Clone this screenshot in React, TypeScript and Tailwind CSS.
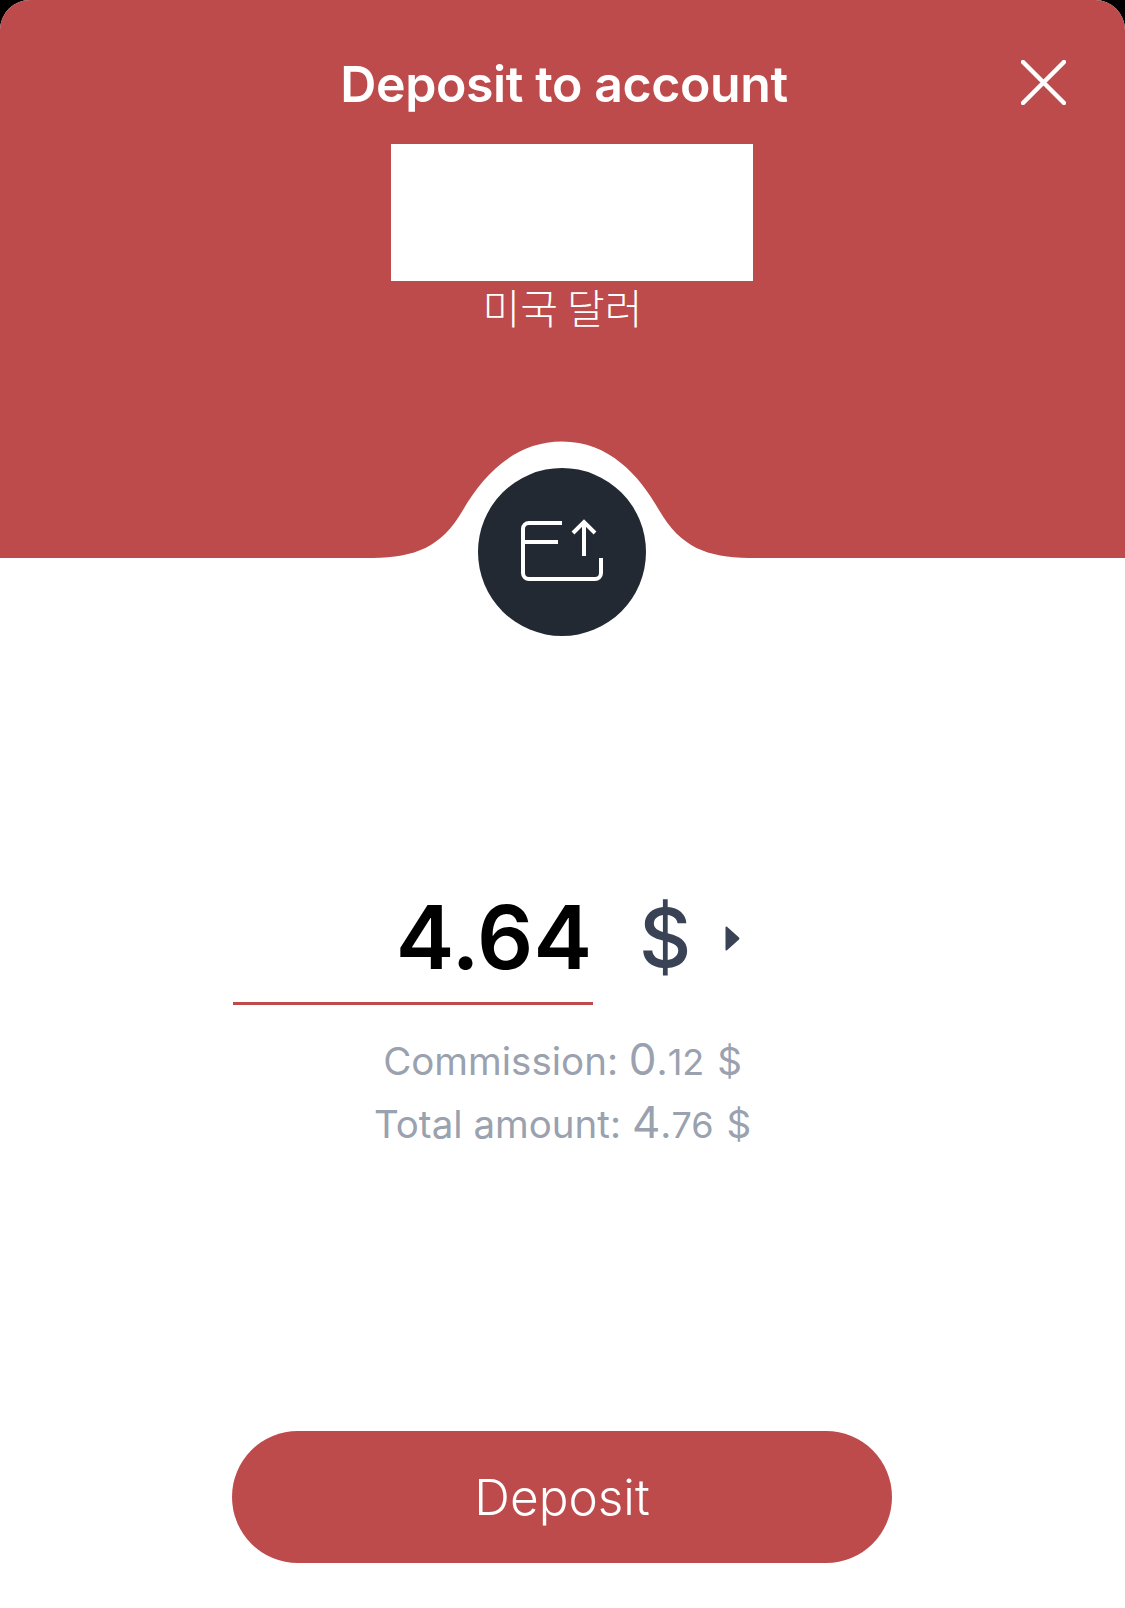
function DepositIcon() {
  return (
    <svg className="w-[88px] h-[68px]" viewBox="0 0 88 68" fill="none" stroke="white" strokeWidth="4">
      <path d="M44 5H11a6 6 0 0 0-6 6v44a6 6 0 0 0 6 6h66a6 6 0 0 0 6-6V40" />
      <path d="M5 24h35" />
      <path d="M66 38V4M55 15L66 4l11 11" />
    </svg>
  );
}

export default function App() {
  return (
    <div className="h-[1608px] bg-black font-['Inter',sans-serif]">
      <div className="relative flex flex-col h-full bg-white rounded-t-[30px] overflow-hidden">
        {/* Header */}
        <div className="relative flex flex-col items-center h-[558px] bg-[#bd4b4b] text-white">
          <h1 className="mt-[54px] ml-[3px] text-[50px] leading-[60px] font-semibold tracking-[-0.4px]">Deposit to account</h1>
          <div className="self-start ml-[391px] mt-[30px] w-[362px] h-[137px] bg-white" />
          <p className="mt-[-3px] text-[41px] leading-[56px] font-light font-['Noto_Sans_CJK_KR',sans-serif]">미국 달러</p>

          <button className="absolute top-[60px] right-[59px] text-white">
            <svg className="w-[45px] h-[45px] block" viewBox="0 0 45 45" fill="none" stroke="currentColor" strokeWidth="4.5" strokeLinecap="round">
              <path d="M2 2l41 41M43 2L2 43" />
            </svg>
          </button>

          <svg className="absolute left-0 top-[440px] w-[1125px] h-[119px]" viewBox="0 0 1125 119" fill="none">
            <path d="M373 118C415 117 441 108 463 70C483 35 515 1.500 562 1.500C609 1.500 639 35 659 70C681 108 707 117 749 118Z" fill="white" />
          </svg>
        </div>

        {/* Icon badge */}
        <div className="absolute left-[478px] top-[468px] w-[168px] h-[168px] rounded-full bg-[#232932] flex items-center justify-center">
          <DepositIcon />
        </div>

        {/* Amount */}
        <div className="mt-[322px] flex items-start">
          <div className="ml-[233px] w-[360px] h-[125px] border-b-[3px] border-[#bd4b4b] pr-[1px] text-right text-[88px] leading-[114px] font-semibold text-black">
            4.64
          </div>
          <div className="ml-[46px] mt-[1px] text-[81px] leading-[114px] font-medium text-[#3a4355]">$</div>
          <svg className="ml-[34px] mt-[46px] w-[15px] h-[25px]" viewBox="0 0 14 25" fill="#3a4355">
            <path d="M0 1.500C0 .5 .7 0 1.500 .8L13.500 11.500C14 12 14 13 13.500 13.500L1.500 24.200C.7 25 0 24.500 0 23.500Z" />
          </svg>
        </div>

        <div className="mt-[24px] flex flex-col items-center text-[#9aa1af] text-[38.5px] leading-[60px]">
          <p>Commission: <span className="text-[44px]">0</span>.<span className="text-[36px]">12</span><span className="ml-[2px]"> $</span></p>
          <p>Total amount: <span className="text-[44px]">4</span>.<span className="text-[36px]">76</span><span className="ml-[2px]"> $</span></p>
        </div>

        {/* Action */}
        <button className="mt-[276px] ml-[232px] w-[660px] h-[132px] rounded-full bg-[#bd4b4b] text-white text-[49.500px] font-light">
          Deposit
        </button>
      </div>
    </div>
  );
}
